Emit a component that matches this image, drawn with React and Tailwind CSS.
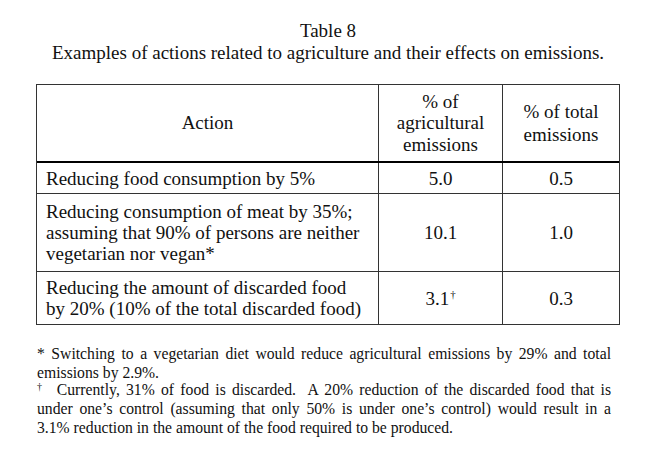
import React from 'react';

const rows = [
  { action: ['Reducing food consumption by 5%'], agri: '5.0', total: '0.5', h: 'h-[31px]' },
  {
    action: ['Reducing consumption of meat by 35%;', 'assuming that 90% of persons are neither', 'vegetarian nor vegan*'],
    agri: '10.1',
    total: '1.0',
    h: 'h-[78px]',
  },
  {
    action: ['Reducing the amount of discarded food', 'by 20% (10% of the total discarded food)'],
    agri: '3.1',
    dagger: true,
    total: '0.3',
    h: 'h-[52px]',
    last: true,
  },
];

const Line = ({ children, justify }) => (
  <div className={justify ? 'text-justify [text-align-last:justify]' : ''}>{children}</div>
);

const App = () => {
  return (
    <div className="w-[660px] h-[470px] bg-white text-[#111] font-[Liberation_Serif,Times_New_Roman,serif] pt-[20px]">
      <div className="ml-[36px] w-[584px] text-center text-[19px] leading-[22px]">
        <div>Table 8</div>
        <div>Examples of actions related to agriculture and their effects on emissions.</div>
      </div>

      {/* table */}
      <div className="ml-[36px] mt-[20px] w-[584px] border border-[#333] text-[19px]">
        <div className="flex h-[78px] border-b-2 border-black leading-[21.5px]">
          <div className="w-[342px] border-r border-[#333] flex items-center justify-center">Action</div>
          <div className="w-[124px] border-r border-[#333] flex flex-col items-center justify-center">
            <span>% of</span>
            <span>agricultural</span>
            <span>emissions</span>
          </div>
          <div className="flex-1 flex flex-col items-center justify-center leading-[23px]">
            <span>% of total</span>
            <span>emissions</span>
          </div>
        </div>

        {rows.map((r, i) => (
          <div key={i} className={`flex ${r.h} ${r.last ? '' : 'border-b border-[#333]'} leading-[21px]`}>
            <div className="w-[342px] border-r border-[#333] flex flex-col justify-center pl-[9px]">
              {r.action.map((l, j) => (
                <span key={j}>{l}</span>
              ))}
            </div>
            <div className="w-[124px] border-r border-[#333] flex items-center justify-center">
              {r.agri}
              {r.dagger && <sup className="text-[11px] -top-[0.4em] ml-[1px]">†</sup>}
            </div>
            <div className="flex-1 flex items-center justify-center">{r.total}</div>
          </div>
        ))}
      </div>

      {/* footnotes */}
      <div className="ml-[37px] mt-[19px] w-[574px] text-[15.7px] leading-[19px]">
        <Line justify>* Switching to a vegetarian diet would reduce agricultural emissions by 29% and total</Line>
        <Line>emissions by 2.9%.</Line>
        <div className="mt-[-2px]">
          <Line justify>
            <sup className="text-[10px] -top-[0.5em]">†</sup>&nbsp; Currently, 31% of food is discarded.&nbsp; A 20% reduction of the discarded food that is
          </Line>
          <Line justify>under one’s control (assuming that only 50% is under one’s control) would result in a</Line>
          <Line>3.1% reduction in the amount of the food required to be produced.</Line>
        </div>
      </div>
    </div>
  );
};

export default App;
